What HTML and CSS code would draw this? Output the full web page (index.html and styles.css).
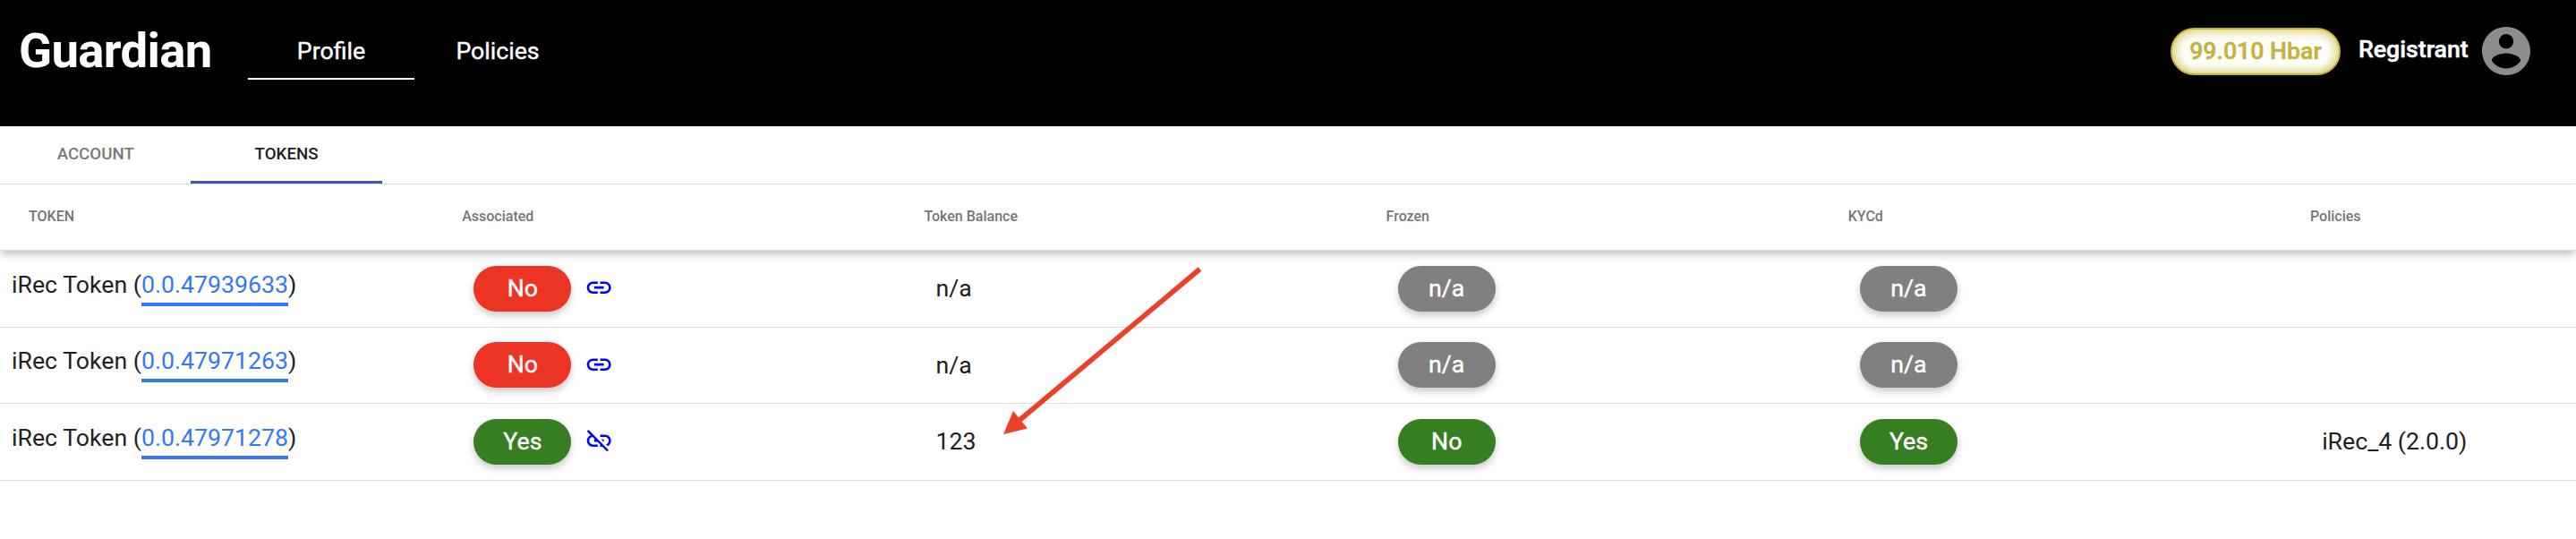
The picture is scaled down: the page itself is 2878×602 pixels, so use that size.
FILE: index.html
```html
<!DOCTYPE html>
<html lang="en">
<head>
<meta charset="utf-8">
<title>Guardian</title>
<link rel="stylesheet" href="styles.css">
</head>
<body>
<svg class="defs" width="0" height="0" aria-hidden="true">
  <symbol id="link" viewBox="0 0 24 24"><path d="M3.9 12c0-1.71 1.39-3.1 3.1-3.1h4V7H7c-2.76 0-5 2.24-5 5s2.24 5 5 5h4v-1.9H7c-1.71 0-3.1-1.39-3.1-3.1zM8 13h8v-2H8v2zm9-6h-4v1.9h4c1.71 0 3.1 1.39 3.1 3.1s-1.39 3.1-3.1 3.1h-4V17h4c2.76 0 5-2.24 5-5s-2.24-5-5-5z"/></symbol>
  <symbol id="link-off" viewBox="0 0 24 24"><path d="M17 7h-4v1.9h4c1.71 0 3.1 1.39 3.1 3.1 0 1.43-.98 2.63-2.31 2.98l1.46 1.46C20.88 15.61 22 13.95 22 12c0-2.76-2.24-5-5-5zm-1 4h-2.19l2 2H16zM2 4.27l3.11 3.11C3.29 8.12 2 9.91 2 12c0 2.76 2.24 5 5 5h4v-1.9H7c-1.71 0-3.1-1.39-3.1-3.1 0-1.59 1.21-2.9 2.76-3.07L8.73 11H8v2h2.73L13 15.27V17h1.73l4.01 4L20 19.74 3.27 3 2 4.27z"/></symbol>
</svg>
<header class="topbar">
  <div class="brand">Guardian</div>
  <nav class="nav">
    <a class="nav-item active">Profile</a>
    <a class="nav-item">Policies</a>
  </nav>
  <div class="account">
    <span class="balance">99.010 Hbar</span>
    <span class="user">Registrant</span>
    <svg class="avatar" viewBox="2 2 20 20"><path d="M12 2C6.48 2 2 6.48 2 12s4.48 10 10 10 10-4.480 10-10S17.520 2 12 2zm0 3c1.660 0 3 1.340 3 3s-1.340 3-3 3-3-1.340-3-3 1.340-3 3-3zm0 14.200c-2.500 0-4.710-1.280-6-3.220.03-1.990 4-3.080 6-3.080 1.990 0 5.970 1.090 6 3.080-1.290 1.940-3.500 3.220-6 3.220z"/></svg>
  </div>
</header>
<div class="tabs">
  <div class="tab">ACCOUNT</div>
  <div class="tab selected">TOKENS</div>
</div>
<main class="table">
  <div class="row head">
    <div>TOKEN</div><div>Associated</div><div>Token Balance</div><div>Frozen</div><div>KYCd</div><div>Policies</div>
  </div>
  <div class="row">
    <div class="token">iRec Token (<a class="id">0.0.47939633</a>)</div>
    <div class="cell"><span class="pill red">No</span><svg class="icon"><use href="#link"/></svg></div>
    <div class="cell">n/a</div>
    <div class="cell"><span class="pill gray">n/a</span></div>
    <div class="cell"><span class="pill gray">n/a</span></div>
    <div class="cell"></div>
  </div>
  <div class="row">
    <div class="token">iRec Token (<a class="id">0.0.47971263</a>)</div>
    <div class="cell"><span class="pill red">No</span><svg class="icon"><use href="#link"/></svg></div>
    <div class="cell">n/a</div>
    <div class="cell"><span class="pill gray">n/a</span></div>
    <div class="cell"><span class="pill gray">n/a</span></div>
    <div class="cell"></div>
  </div>
  <div class="row">
    <div class="token">iRec Token (<a class="id">0.0.47971278</a>)</div>
    <div class="cell"><span class="pill green">Yes</span><svg class="icon"><use href="#link-off"/></svg></div>
    <div class="cell">123</div>
    <div class="cell"><span class="pill green">No</span></div>
    <div class="cell"><span class="pill green">Yes</span></div>
    <div class="cell">iRec_4 (2.0.0)</div>
  </div>
</main>
<svg class="arrow" viewBox="0 0 230 196"><path d="M220.500 8.500L17 179" stroke="#ec4127" stroke-width="5.600" fill="none"/><path d="M1 193L12 167 28 186.500z" fill="#ec4127"/></svg>
</body>
</html>
```
FILE: styles.css
```css
* { box-sizing: border-box; }
body { margin: 0; height: 602px; overflow: hidden; background: #fff; color: #212121; font-family: Roboto, sans-serif; font-size: 26.7px; position: relative; }
.defs { position: absolute; }
.topbar { display: flex; height: 141px; background: #000; color: #fff; padding: 0 51px 0 21px; }
.brand { width: 256px; font-size: 54.500px; font-weight: 700; line-height: 66px; padding-top: 23px; letter-spacing: -0.7px; }
.nav { display: flex; padding-top: 25px; }
.nav-item { width: 186px; height: 64px; line-height: 64px; text-align: center; -webkit-text-stroke: 0.4px currentColor; border-bottom: 2px solid transparent; }
.nav-item.active { border-color: #fff; }
.account { display: flex; margin-left: auto; padding-top: 30px; height: 84px; }
.balance { width: 190px; height: 53px; margin-top: 1px; border: 2px solid #c8b632; border-radius: 27px; background: #fff; box-shadow: inset 0 0 14px #c8b632; color: #c6b23a; font-weight: 500; -webkit-text-stroke: 0.5px currentColor; line-height: 49px; text-align: center; }
.user { width: 138px; margin-left: 20px; line-height: 50px; font-weight: 500; -webkit-text-stroke: 0.5px currentColor; }
.avatar { width: 54px; height: 54px; fill: #8c8c8c; }
.tabs { display: flex; height: 65px; border-bottom: 1px solid #e0e0e0; }
.tab { width: 213.400px; height: 64px; line-height: 62px; text-align: center; font-size: 18.700px; font-weight: 500; color: #7a7a7a; border-bottom: 3px solid transparent; }
.tab.selected { color: #212121; border-color: #3f51b5; }
.row { display: grid; grid-template-columns: repeat(5, 516.200px) 1fr; height: 85.500px; border-bottom: 1px solid #dcdcdc; }
.head { height: 74.300px; line-height: 71px; font-size: 16px; font-weight: 500; color: #757575; box-shadow: 0 5px 9px -1px rgba(0,0,0,.26); }
.head div:first-child { padding-left: 32px; }
.token { padding-left: 13px; line-height: 31px; padding-top: 22.500px; }
.id { display: inline-block; height: 39px; color: #3478f6; border-bottom: 4px solid #3478f6; }
.cell { display: flex; align-items: center; padding-left: 13.200px; height: 84px; }
.pill { width: 109px; height: 51px; line-height: 50px; border-radius: 26px; text-align: center; color: #fff; -webkit-text-stroke: 0.4px currentColor; box-shadow: 0 4px 8px rgba(0,0,0,.22); }
.red { background: #eb3424; }
.gray { background: #808080; }
.green { background: #377e22; }
.icon { width: 32.400px; height: 32.400px; margin: -2px 0 0 14.300px; fill: #00f; }
.arrow { position: absolute; left: 1120px; top: 292px; width: 230px; height: 196px; }
```
